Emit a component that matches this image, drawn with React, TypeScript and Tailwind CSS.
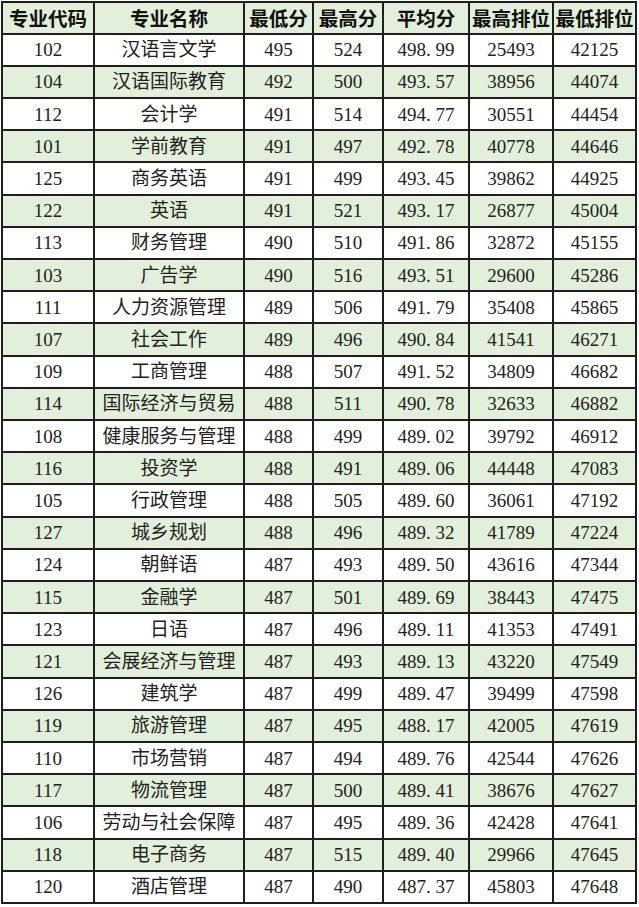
import React from "react";

type Row = [string, string, string, string, string, string, string];

const rows: Row[] = [
  ["102", "汉语言文学", "495", "524", "498.99", "25493", "42125"],
  ["104", "汉语国际教育", "492", "500", "493.57", "38956", "44074"],
  ["112", "会计学", "491", "514", "494.77", "30551", "44454"],
  ["101", "学前教育", "491", "497", "492.78", "40778", "44646"],
  ["125", "商务英语", "491", "499", "493.45", "39862", "44925"],
  ["122", "英语", "491", "521", "493.17", "26877", "45004"],
  ["113", "财务管理", "490", "510", "491.86", "32872", "45155"],
  ["103", "广告学", "490", "516", "493.51", "29600", "45286"],
  ["111", "人力资源管理", "489", "506", "491.79", "35408", "45865"],
  ["107", "社会工作", "489", "496", "490.84", "41541", "46271"],
  ["109", "工商管理", "488", "507", "491.52", "34809", "46682"],
  ["114", "国际经济与贸易", "488", "511", "490.78", "32633", "46882"],
  ["108", "健康服务与管理", "488", "499", "489.02", "39792", "46912"],
  ["116", "投资学", "488", "491", "489.06", "44448", "47083"],
  ["105", "行政管理", "488", "505", "489.60", "36061", "47192"],
  ["127", "城乡规划", "488", "496", "489.32", "41789", "47224"],
  ["124", "朝鲜语", "487", "493", "489.50", "43616", "47344"],
  ["115", "金融学", "487", "501", "489.69", "38443", "47475"],
  ["123", "日语", "487", "496", "489.11", "41353", "47491"],
  ["121", "会展经济与管理", "487", "493", "489.13", "43220", "47549"],
  ["126", "建筑学", "487", "499", "489.47", "39499", "47598"],
  ["119", "旅游管理", "487", "495", "488.17", "42005", "47619"],
  ["110", "市场营销", "487", "494", "489.76", "42544", "47626"],
  ["117", "物流管理", "487", "500", "489.41", "38676", "47627"],
  ["106", "劳动与社会保障", "487", "495", "489.36", "42428", "47641"],
  ["118", "电子商务", "487", "515", "489.40", "29966", "47645"],
  ["120", "酒店管理", "487", "490", "487.37", "45803", "47648"],
];

const headers = ["专业代码", "专业名称", "最低分", "最高分", "平均分", "最高排位", "最低排位"];

// SimSun-style half-width period: give the dot a full digit cell
function Avg({ value }: { value: string }) {
  const [a, b] = value.split(".");
  return (
    <>
      {a}
      <span className="inline-block w-[0.5em] text-left">.</span>
      {b}
    </>
  );
}

export default function App() {
  return (
    <div className="min-h-[907px] bg-white pl-[1px] pt-[1px]">
      <table className="h-[903px] w-[636px] table-fixed border-collapse border-2 border-[#1e1e1e]">
        <colgroup>
          <col className="w-[92px]" />
          <col className="w-[150px]" />
          <col className="w-[69px]" />
          <col className="w-[70px]" />
          <col className="w-[86px]" />
          <col className="w-[84px]" />
          <col className="w-[83px]" />
        </colgroup>
        <thead>
          <tr className="h-[31.5px] bg-[#e2efda]">
            {headers.map((h) => (
              <th
                key={h}
                className="whitespace-nowrap border-2 border-[#1e1e1e] p-0 text-center font-['Noto_Sans_CJK_SC',sans-serif] text-[19.5px] font-bold leading-none text-[#111]"
              >
                {h}
              </th>
            ))}
          </tr>
        </thead>
        <tbody>
          {rows.map((r, i) => (
            <tr key={r[0]} className={`h-[32.2px] ${i % 2 === 1 ? "bg-[#e2efda]" : "bg-white"}`}>
              {r.map((c, j) => (
                <td
                  key={j}
                  className="whitespace-nowrap border-2 border-[#1e1e1e] p-0 text-center font-['Liberation_Serif','Noto_Sans_CJK_SC',serif] text-[19px] leading-none text-[#222]"
                >
                  {j === 4 ? <Avg value={c} /> : c}
                </td>
              ))}
            </tr>
          ))}
        </tbody>
      </table>
    </div>
  );
}
